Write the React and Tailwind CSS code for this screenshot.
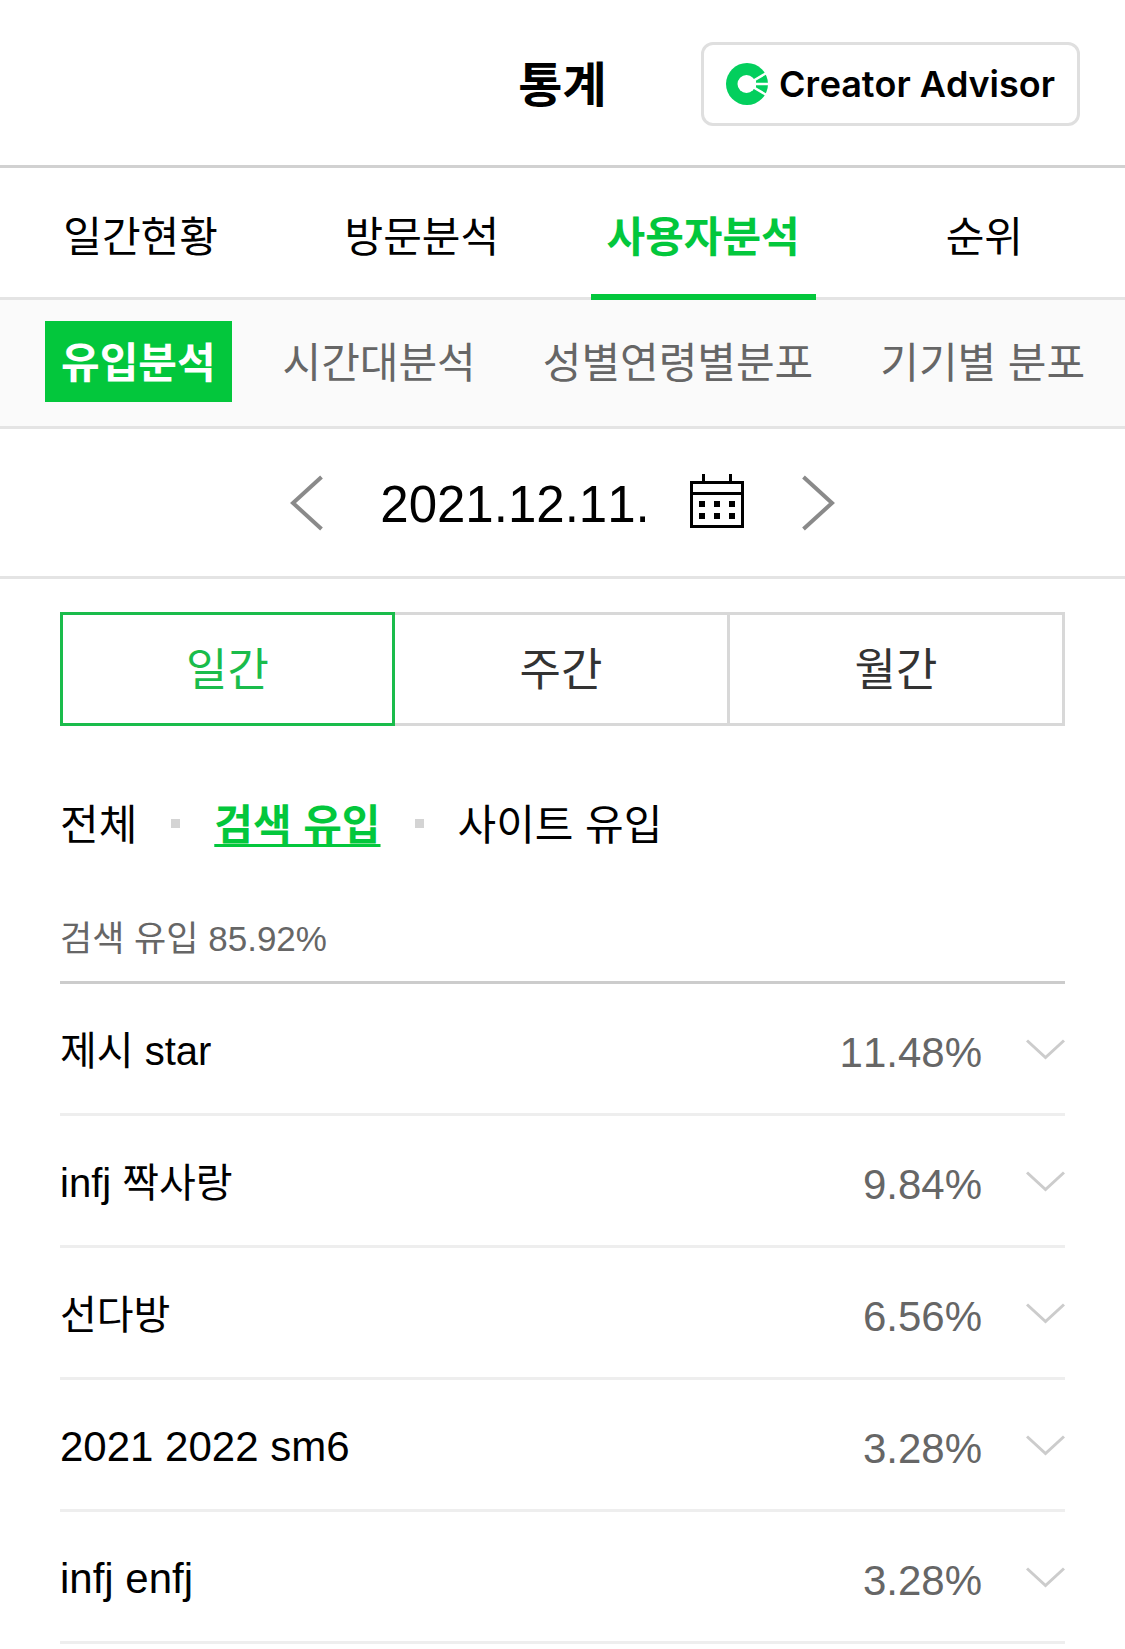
import React, { useState } from 'react';

const mainTabs = ['일간현황', '방문분석', '사용자분석', '순위'];
const subTabs = ['유입분석', '시간대분석', '성별연령별분포', '기기별 분포'];
const periods = ['일간', '주간', '월간'];
const inflowTypes = ['전체', '검색 유입', '사이트 유입'];

const keywords = [
  { name: '제시 star', ratio: '11.48%', size: 'text-[40px]' },
  { name: 'infj 짝사랑', ratio: '9.84%', size: 'text-[40px]' },
  { name: '선다방', ratio: '6.56%', size: 'text-[40px]' },
  { name: '2021 2022 sm6', ratio: '3.28%', size: 'text-[42px]' },
  { name: 'infj enfj', ratio: '3.28%', size: 'text-[42px]' },
];

function AdvisorLogo() {
  return (
    <svg className="w-[42px] h-[42px] shrink-0" viewBox="0 0 42 42" aria-hidden="true">
      <circle cx="21" cy="21" r="21" fill="#03cf5d" />
      <circle cx="20.5" cy="21" r="9" fill="#fff" />
      <path d="M26 15 L30 17.5 V24.5 L26 27 Z" fill="#fff" />
      <path d="M26 18.5 L43 8.5 M26 21 H43 M26 23.5 L43 33.5" stroke="#fff" strokeWidth="2.5" />
    </svg>
  );
}

function CalendarIcon() {
  return (
    <svg className="w-[54px] h-[54px]" viewBox="0 0 54 54" aria-hidden="true">
      <path d="M1.5 8.5 H52.5 V52.5 H1.5 Z M1.5 19.5 H52.5 M13.5 0 V8 M40.5 0 V8" fill="none" stroke="#000" strokeWidth="3" />
      <path d="M9 27h6v6h-6z M24 27h6v6h-6z M39 27h6v6h-6z M9 39h6v6h-6z M24 39h6v6h-6z M39 39h6v6h-6z" fill="#000" />
    </svg>
  );
}

function Arrow({ d }) {
  return (
    <svg className="w-[33px] h-[56px]" viewBox="0 0 33 56" aria-hidden="true">
      <path d={d} fill="none" stroke="#8a8a8a" strokeWidth="4" />
    </svg>
  );
}

function App() {
  const [mainTab, setMainTab] = useState('사용자분석');
  const [subTab, setSubTab] = useState('유입분석');
  const [period, setPeriod] = useState('일간');
  const [inflow, setInflow] = useState('검색 유입');

  return (
    <div className="min-h-screen bg-white text-black font-['Liberation_Sans','Noto_Sans_CJK_KR',sans-serif] [font-kerning:none]">
      {/* 상단 헤더 */}
      <header className="grid grid-cols-[1fr_auto_1fr] items-center h-[168px] pt-[3px] px-[45px] border-b-3 border-[#d1d1d1]">
        <h1 className="col-start-2 pt-[3px] text-[48px] leading-[60px] font-bold">통계</h1>
        <a
          href="#advisor"
          className="justify-self-end flex items-center gap-[11px] h-[84px] px-[22px] border-3 border-[#dfdfdf] rounded-xl font-['Inter',sans-serif] text-[36px] leading-[42px] font-semibold whitespace-nowrap"
        >
          <AdvisorLogo />
          Creator Advisor
        </a>
      </header>

      {/* 메인 탭 */}
      <nav className="grid grid-cols-4 h-[132px] border-b-3 border-[#e4e4e4]">
        {mainTabs.map((tab) => (
          <a
            key={tab}
            href="#tab"
            onClick={() => setMainTab(tab)}
            className={`justify-self-center flex items-center h-[132px] pt-[14px] px-4 text-[42px] leading-[54px] border-b-6 
              ${tab === mainTab ? 'border-[#03c73c] text-[#03c73c] font-bold' : 'border-transparent'}`}
          >
            {tab}
          </a>
        ))}
      </nav>

      {/* 서브 탭 */}
      <nav className="flex items-center gap-[35px] h-[129px] pb-[3px] px-[45px] bg-[#fafafa] border-b-3 border-[#e4e4e4] whitespace-nowrap">
        {subTabs.map((tab) => (
          <a
            key={tab}
            href="#sub"
            onClick={() => setSubTab(tab)}
            className={`flex items-center h-[81px] pt-1 px-4 text-[42px] leading-[54px] 
              ${tab === subTab ? 'bg-[#03c73c] text-white font-bold' : 'text-[#666]'}`}
          >
            {tab}
          </a>
        ))}
      </nav>

      {/* 날짜 선택 */}
      <div className="flex items-center justify-center h-[150px] border-b-3 border-[#e4e4e4]">
        <button aria-label="이전 날짜">
          <Arrow d="M31.5 2 L3 28 L31.5 54" />
        </button>
        <span className="ml-[57px] mr-10 pt-1 text-[51px] leading-[60px]">2021.12.11.</span>
        <button aria-label="달력 열기" className="pb-[3px]">
          <CalendarIcon />
        </button>
        <button aria-label="다음 날짜" className="ml-[58px]">
          <Arrow d="M1.5 2 L30 28 L1.5 54" />
        </button>
      </div>

      <main className="px-[60px] pt-[33px]">
        {/* 기간 */}
        <div className="grid grid-cols-3">
          {periods.map((item) => (
            <button
              key={item}
              onClick={() => setPeriod(item)}
              className={`h-[114px] pt-1 text-[45px] leading-[54px] 
                ${item === period ? 'border-3 border-[#1abc4b] text-[#1abc4b]' : 'border-y-3 border-r-3 border-[#d8d8d8] text-[#333]'}`}
            >
              {item}
            </button>
          ))}
        </div>

        {/* 유입 종류 */}
        <ul className="flex items-center mt-[67px] gap-[34px] text-[42px] leading-[54px] whitespace-nowrap">
          {inflowTypes.map((type, i) => (
            <li key={type} className="flex items-center gap-[34px]">
              {i > 0 && <span className="size-[9px] bg-[#d4d4d4]" />}
              <button
                onClick={() => setInflow(type)}
                className={`pt-[6px] ${type === inflow ? 'text-[#03c73c] font-bold underline decoration-3 underline-offset-4 [text-decoration-skip-ink:none]' : ''}`}
              >
                {type}
              </button>
            </li>
          ))}
        </ul>

        <h2 className="mt-[63px] pb-5 text-[35px] leading-[45px] text-[#666] border-b-3 border-[#ccc]">검색 유입 85.92%</h2>

        {/* 검색어 목록 */}
        <ul>
          {keywords.map(({ name, ratio, size }) => (
            <li key={name} className="border-b-3 border-[#eee]">
              <button className="flex items-center w-full h-[129px] pt-px text-left leading-[54px]">
                <span className={`flex-1 pt-[3px] ${size}`}>{name}</span>
                <span className="mr-[44px] pt-2 text-[42px] text-[#666]">{ratio}</span>
                <svg className="w-[39px] h-[21px]" viewBox="0 0 39 21" aria-hidden="true">
                  <path d="M1 1.5 L19.5 18.5 L38 1.5" fill="none" stroke="#ccc" strokeWidth="3" />
                </svg>
              </button>
            </li>
          ))}
        </ul>
      </main>
    </div>
  );
}

export default App;
